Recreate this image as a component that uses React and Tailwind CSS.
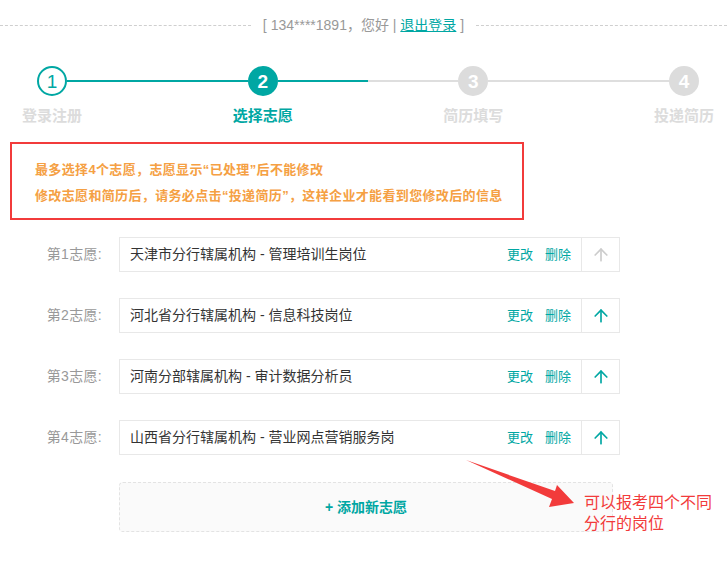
import React from "react";
import { ArrowUp } from "lucide-react";

const FONT = { fontFamily: '"Liberation Sans", "Noto Sans CJK SC", sans-serif' };

const STEPS = [
  { n: 1, label: "登录注册", state: "done" },
  { n: 2, label: "选择志愿", state: "active" },
  { n: 3, label: "简历填写", state: "todo" },
  { n: 4, label: "投递简历", state: "todo" },
];

const CHOICES = [
  { idx: 1, name: "天津市分行辖属机构 - 管理培训生岗位", first: true },
  { idx: 2, name: "河北省分行辖属机构 - 信息科技岗位" },
  { idx: 3, name: "河南分部辖属机构 - 审计数据分析员" },
  { idx: 4, name: "山西省分行辖属机构 - 营业网点营销服务岗" },
];

function StepCircle({ n, state }) {
  if (state === "done")
    return (
      <div className="relative z-10 w-[30px] h-[30px] rounded-full border-2 border-[#00a7a3] bg-white flex items-center justify-center text-[19px] text-[#00a7a3] leading-none">
        {n}
      </div>
    );
  if (state === "active")
    return (
      <div className="relative z-10 w-[30px] h-[30px] rounded-full bg-[#00a7a3] flex items-center justify-center text-[19px] font-bold text-white leading-none">
        {n}
      </div>
    );
  return (
    <div className="relative z-10 w-[30px] h-[30px] rounded-full bg-[#dcdcdc] flex items-center justify-center text-[19px] font-bold text-white leading-none">
      {n}
    </div>
  );
}

function Connector({ fill }) {
  // fill: 0, 0.5, 1 — part of the line already passed
  return (
    <div className="flex-1 flex h-[2px] mt-[14px] -mx-[15px]">
      {fill === 1 && <div className="flex-1 bg-[#00a7a3]" />}
      {fill === 0.5 && (
        <>
          <div className="flex-1 bg-[#00a7a3]" />
          <div className="flex-1 bg-[#dedede]" />
        </>
      )}
      {fill === 0 && <div className="flex-1 bg-[#dedede]" />}
    </div>
  );
}

export default function App() {
  return (
    <div className="relative w-[727px] h-[569px] bg-white overflow-hidden" style={FONT}>
      {/* ── user bar ── */}
      <div className="flex items-center pt-[15px]">
        <div className="flex-1 border-t border-dashed border-[#cfcfcf]" />
        <div className="px-3 text-[14px] leading-[20px] text-[#999]">
          [ 134****1891，您好 |{" "}
          <a className="text-[#00a7a3] underline">退出登录</a> ]
        </div>
        <div className="flex-1 border-t border-dashed border-[#cfcfcf]" />
      </div>

      {/* ── steps ── */}
      <div className="ml-[22px] w-[692px] mt-[31px] flex items-start">
        {STEPS.map((s, i) => (
          <React.Fragment key={s.n}>
            {i > 0 && <Connector fill={i === 1 ? 1 : i === 2 ? 0.5 : 0} />}
            <div className="w-[60px] flex flex-col items-center">
              <StepCircle n={s.n} state={s.state} />
              <p
                className={`mt-[10px] text-[15px] leading-[20px] font-bold whitespace-nowrap ${
                  s.state === "active" ? "text-[#00a7a3]" : "text-[#dcdcdc]"
                }`}
              >
                {s.label}
              </p>
            </div>
          </React.Fragment>
        ))}
      </div>

      {/* ── notice ── */}
      <div className="ml-[10px] mt-[16px] w-[514px] h-[78px] border-2 border-[#f23b3b] pl-[23px] pt-[13px] text-[13px] leading-[26px] font-bold tracking-[0.35px] text-[#f5a043]">
        <p>最多选择4个志愿，志愿显示“已处理”后不能修改</p>
        <p>修改志愿和简历后，请务必点击“投递简历”，这样企业才能看到您修改后的信息</p>
      </div>

      {/* ── choices ── */}
      <div className="mt-[17px] flex flex-col gap-[26px]">
        {CHOICES.map((c) => (
          <div key={c.idx} className="flex items-center">
            <span className="w-[102px] text-right text-[14px] tracking-[0.3px] text-[#999]">第{c.idx}志愿:</span>
            <div className="ml-[17px] w-[501px] h-[35px] border border-[#e8e8e8] flex items-center">
              <span className="flex-1 pl-[10px] text-[14px] text-[#333]">{c.name}</span>
              <span className="text-[13px] text-[#00a7a3]">更改</span>
              <span className="ml-[12px] mr-[10px] text-[13px] text-[#00a7a3]">删除</span>
              <div className="w-[38px] h-full border-l border-[#e8e8e8] flex items-center justify-center">
                <ArrowUp
                  size={20}
                  strokeWidth={2}
                  className={c.first ? "text-[#cccccc]" : "text-[#00a7a3]"}
                />
              </div>
            </div>
          </div>
        ))}
      </div>

      {/* ── add ── */}
      <div className="ml-[119px] mt-[27px] w-[494px] h-[50px] rounded-[4px] border border-dashed border-[#e3e3e3] bg-[#fafafa] flex items-center justify-center text-[14px] font-bold text-[#00a7a3]">
        + 添加新志愿
      </div>

      {/* ── annotation ── */}
      <svg className="absolute left-0 top-0 pointer-events-none" width="727" height="569">
        <polygon points="466,460 555,491 557,485 574,503 549,507 552,499" fill="#f23b3b" />
      </svg>
      <p className="absolute left-[584px] top-[492px] w-[130px] text-[16px] leading-[21px] text-[#f23b3b]">
        可以报考四个不同分行的岗位
      </p>
    </div>
  );
}
